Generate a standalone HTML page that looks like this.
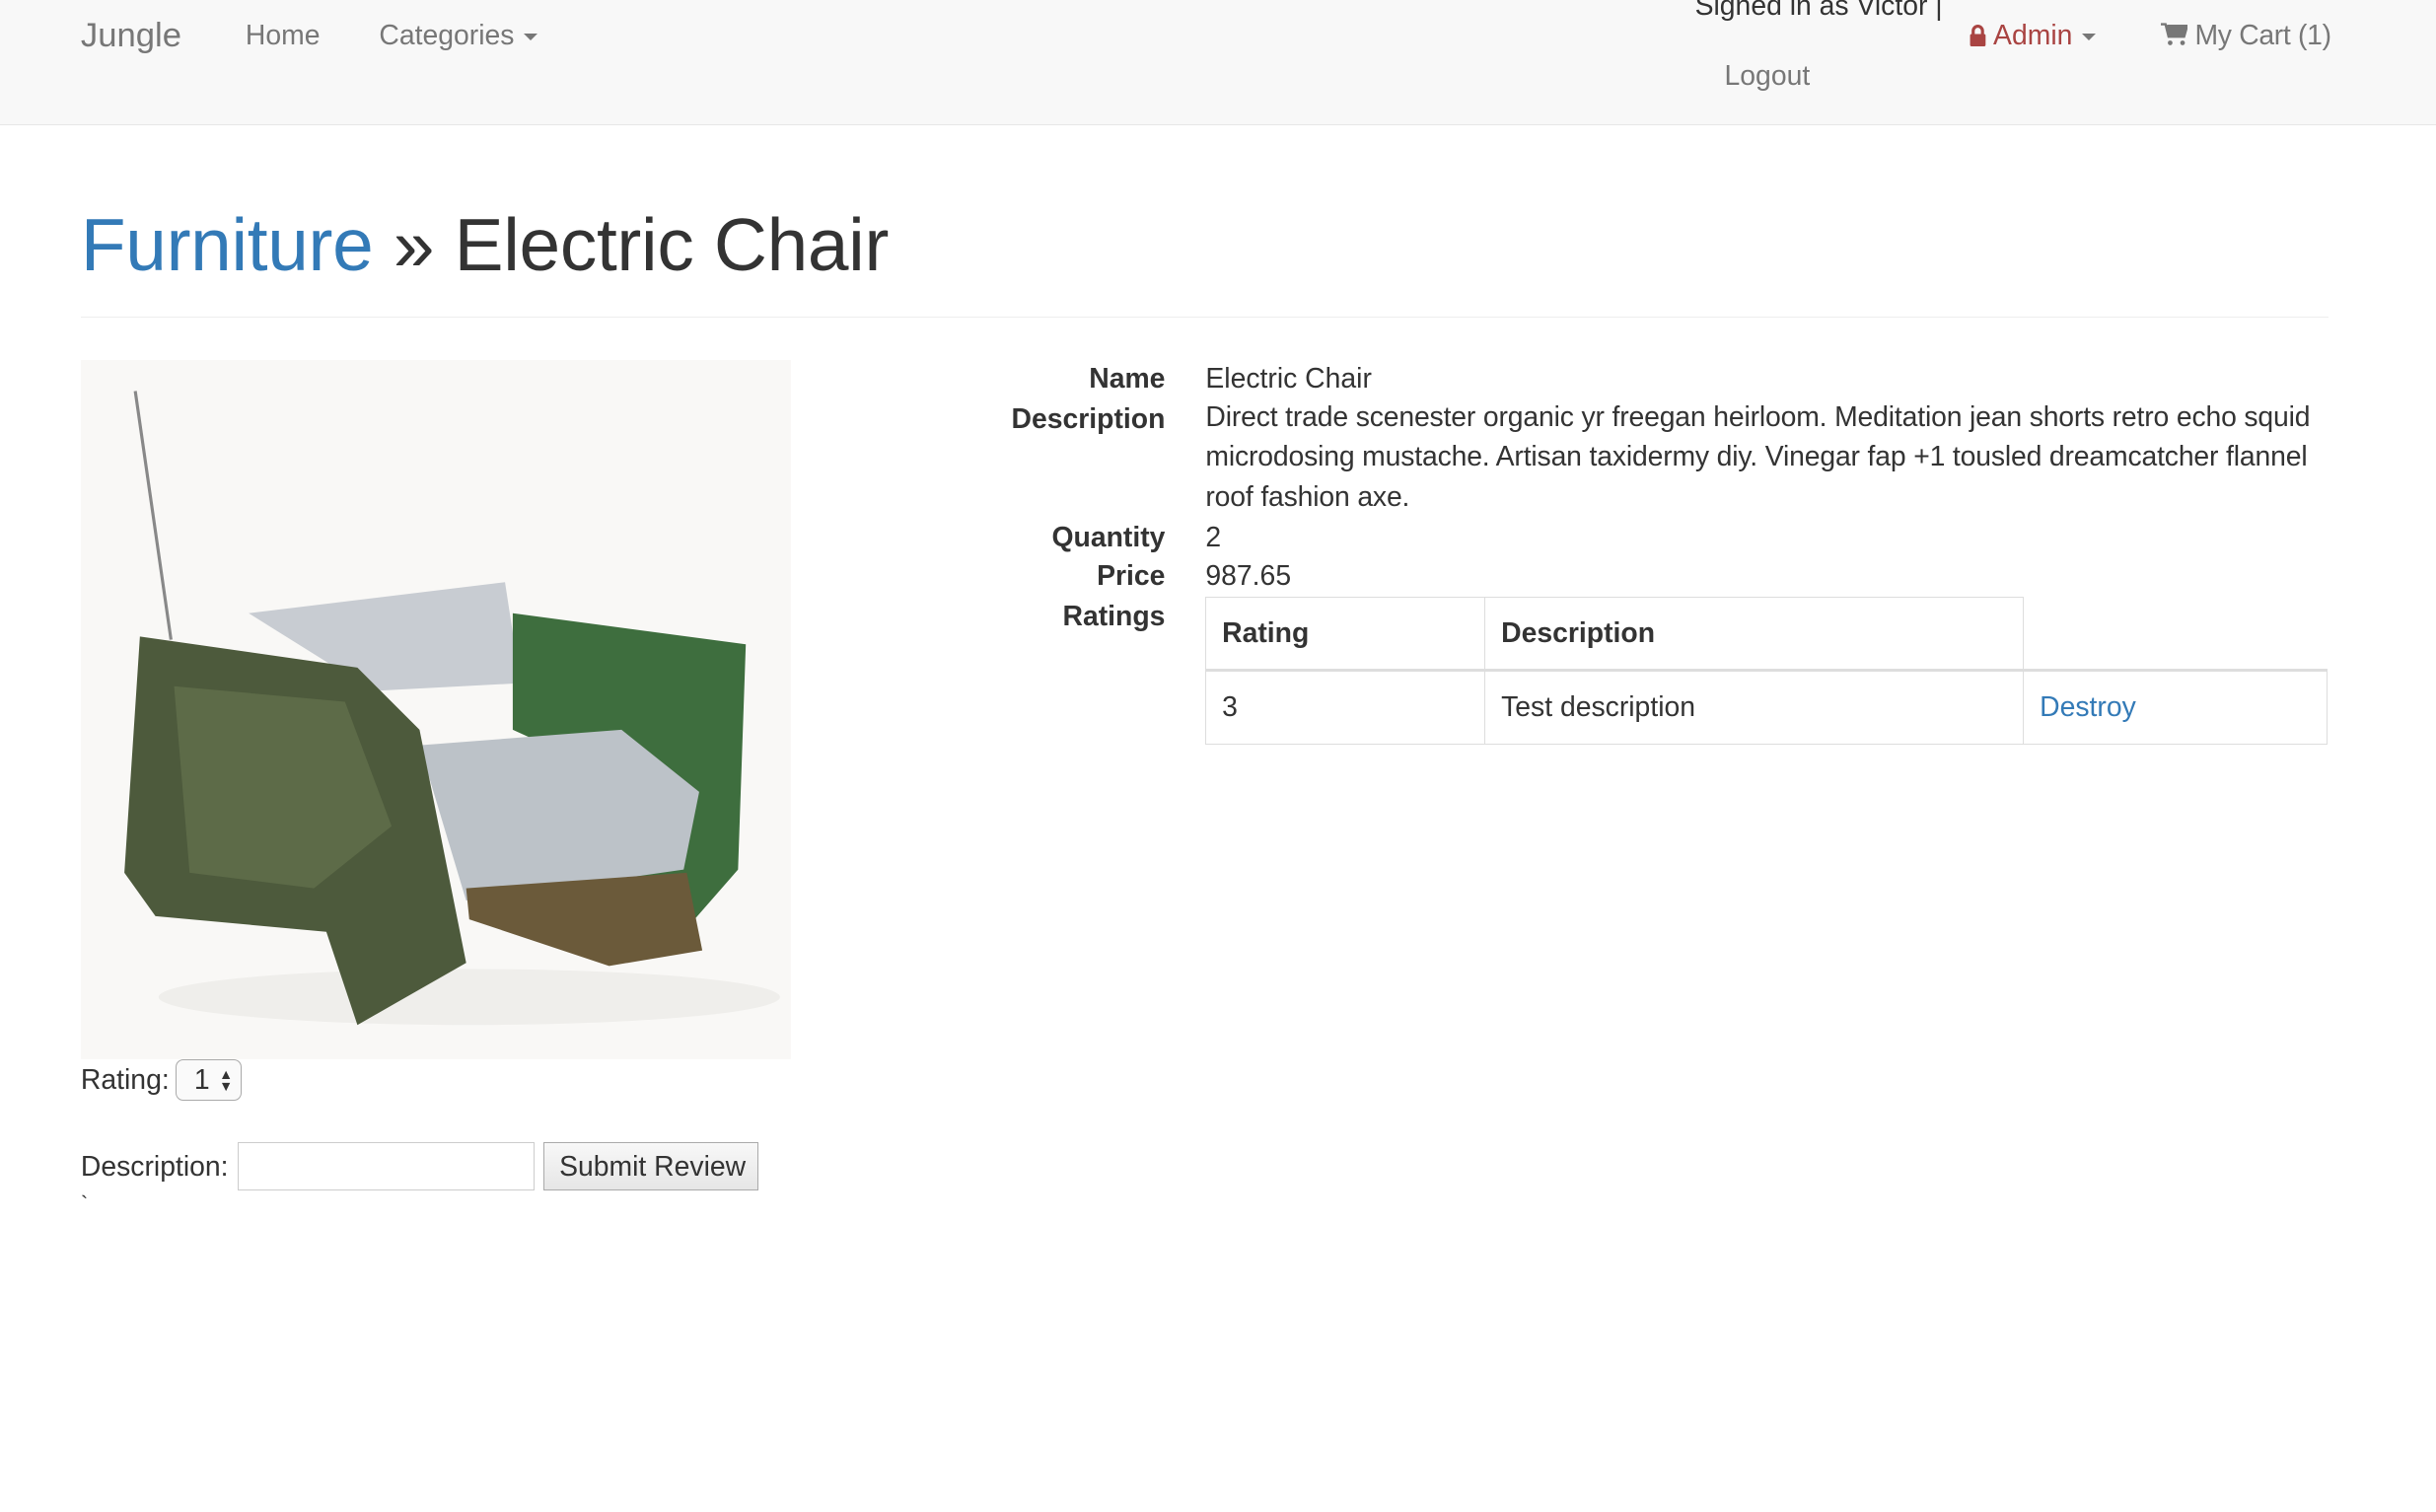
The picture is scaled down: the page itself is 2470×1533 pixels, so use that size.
<!DOCTYPE html>
<html><head><meta charset="utf-8"><style>
html,body{margin:0;padding:0;background:#fff}
body{width:1568px;height:973px;zoom:1.57526;position:relative;overflow:hidden;font-family:"Liberation Sans",Arial,sans-serif;color:#333;font-size:18px}
.a{position:absolute;white-space:nowrap;line-height:1}
.nav{position:absolute;left:0;top:0;width:1568px;height:80px;background:#f8f8f8;border-bottom:1px solid #e7e7e7}
.car{display:inline-block;width:0;height:0;border-left:5px solid transparent;border-right:5px solid transparent;border-top:5px solid #777;vertical-align:middle;margin-left:6px}
dt{position:absolute;right:818px;font-weight:bold;text-align:right;line-height:1;white-space:nowrap}
table{position:absolute;left:776px;top:384px;border-collapse:collapse;font-size:18px}
td,th{border:1px solid #ddd;padding:0 10px;text-align:left;height:46px}
th{border-bottom:2px solid #ddd}
</style></head><body>
<div class="nav"></div>
<div class="a" style="left:52px;top:12px;font-size:22px;color:#777">Jungle</div>
<div class="a" style="left:158px;top:14px;color:#777">Home</div>
<div class="a" style="left:244px;top:14px;color:#777">Categories<span class="car"></span></div>
<div class="a" style="left:1091px;top:-5px;color:#333">Signed in as Victor |</div>
<div class="a" style="left:1110px;top:40px;color:#777">Logout</div>
<div class="a" style="left:1267px;top:14px;color:#a94442"><svg width="12" height="14" viewBox="0 0 12 14" style="vertical-align:-1px"><path d="M3 6V4a3 3 0 0 1 6 0v2" fill="none" stroke="#a94442" stroke-width="2"/><rect x="1" y="6" width="10" height="8" rx="1" fill="#a94442"/></svg> Admin<span class="car"></span></div>
<div class="a" style="left:1391px;top:14px;color:#777;letter-spacing:-0.2px"><svg width="17" height="15" viewBox="0 0 17 15" style="vertical-align:-1px"><path d="M0 1h3l2 8h10l2-7H4" fill="#777" stroke="#777" stroke-width="1.5"/><circle cx="6" cy="13" r="1.5" fill="#777"/><circle cx="14" cy="13" r="1.5" fill="#777"/></svg> My Cart (1)</div>

<div class="a" style="left:52px;top:134px;font-size:47.5px;color:#333;letter-spacing:-0.2px"><span style="color:#337ab7">Furniture</span> » Electric Chair</div>
<div style="position:absolute;left:52px;top:204px;width:1447px;border-top:1px solid #eee"></div>

<svg style="position:absolute;left:52px;top:232px" width="457" height="450" viewBox="0 0 457 450">
<rect width="457" height="450" fill="#f9f8f6"/>
<ellipse cx="250" cy="410" rx="200" ry="18" fill="#efeeeb"/>
<line x1="35" y1="20" x2="58" y2="180" stroke="#888" stroke-width="2"/>
<polygon points="108,163 273,143 283,208 188,213" fill="#c8ccd2"/>
<polygon points="278,163 428,183 423,328 388,368 328,378 328,308 388,288 278,238" fill="#3e6e3e"/>
<polygon points="218,248 348,238 398,278 388,328 248,348" fill="#bcc2c8"/>
<polygon points="38,178 178,198 218,238 248,388 178,428 158,368 48,358 28,330" fill="#4d5a3c"/>
<polygon points="60,210 170,220 200,300 150,340 70,330" fill="#5d6b48"/>
<polygon points="248,340 390,330 400,380 340,390 250,360" fill="#6b5a3a"/>
</svg>

<dl style="margin:0">
<dt style="top:235px">Name</dt>
<dt style="top:261px">Description</dt>
<dt style="top:337px">Quantity</dt>
<dt style="top:362px">Price</dt>
<dt style="top:388px">Ratings</dt>
</dl>
<div class="a" style="left:776px;top:235px">Electric Chair</div>
<div style="position:absolute;left:776px;top:256px;width:725px;line-height:25.5px;letter-spacing:-0.1px">Direct trade scenester organic yr freegan heirloom. Meditation jean shorts retro echo squid microdosing mustache. Artisan taxidermy diy. Vinegar fap +1 tousled dreamcatcher flannel roof fashion axe.</div>
<div class="a" style="left:776px;top:337px">2</div>
<div class="a" style="left:776px;top:362px">987.65</div>
<table>
<tr><th style="width:159px">Rating</th><th style="width:326px">Description</th><th style="border:none;border-bottom:2px solid #ddd;width:175px"></th></tr>
<tr><td>3</td><td>Test description</td><td style="color:#337ab7">Destroy</td></tr>
</table>

<div class="a" style="left:52px;top:686px">Rating:</div>
<div style="position:absolute;left:113px;top:682px;width:41px;height:25px;border:1px solid #aaa;border-radius:5px;background:#fafafa"></div>
<div class="a" style="left:125px;top:686px">1</div>
<div class="a" style="left:141px;top:688px;font-size:9px;line-height:8px">▲<br>▼</div>
<div class="a" style="left:52px;top:742px">Description:</div>
<div style="position:absolute;left:153px;top:735px;width:190px;height:30px;border:1px solid #ccc;background:#fff"></div>
<div style="position:absolute;left:350px;top:735px;width:137px;height:30px;border:1px solid #aaa;background:linear-gradient(#f8f8f8,#e6e6e6)"></div>
<div class="a" style="left:360px;top:742px">Submit Review</div>
<div class="a" style="left:52px;top:768px;font-size:14px">`</div>
</body></html>
